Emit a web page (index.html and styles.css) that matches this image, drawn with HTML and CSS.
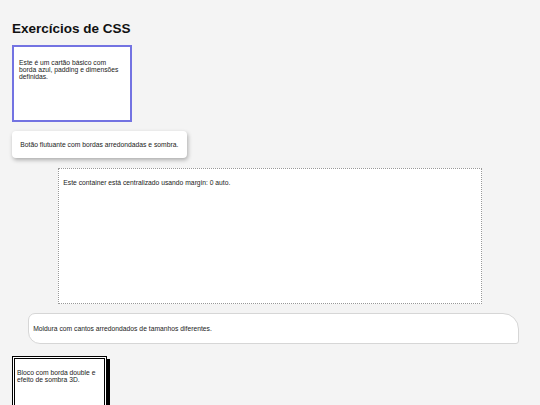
FILE: index.html
```html
<!DOCTYPE html>
<html lang="pt-BR">
<head>
<meta charset="utf-8">
<title>Exercícios de CSS</title>
<link rel="stylesheet" href="styles.css">
</head>
<body>
<main class="page">
  <h1 class="title">Exercícios de CSS</h1>
  <div class="card-basic">
    <p>Este é um cartão básico com borda azul, padding e dimensões definidas.</p>
  </div>
  <div class="btn-float">Botão flutuante com bordas arredondadas e sombra.</div>
  <div class="centered">
    <p>Este container está centralizado usando margin: 0 auto.</p>
  </div>
  <div class="frame">
    <p>Moldura com cantos arredondados de tamanhos diferentes.</p>
  </div>
  <div class="block3d">
    <p>Bloco com borda double e efeito de sombra 3D.</p>
  </div>
</main>
</body>
</html>
```
FILE: styles.css
```css
* { box-sizing: border-box; }
html, body { margin: 0; padding: 0; }
body {
  background: #f4f4f4;
  font-family: "Liberation Sans", Arial, sans-serif;
  font-size: 6.75px;
  color: #222;
}
.page {
  display: flex;
  flex-direction: column;
  align-items: flex-start;
  padding: 12px 12px 0 12px;
}
p { margin: 6.75px 0; }
.title {
  font-size: 13.5px;
  font-weight: bold;
  color: #111;
  margin: 9px 0 8.5px 0;
}
.card-basic {
  width: 119.7px;
  height: 77.7px;
  background: #fff;
  border: 2px solid #7373e2;
  padding: 5.4px 5px;
}
.btn-float {
  margin-top: 9.3px;
  background: #fff;
  padding: 9.8px 8.3px;
  border-radius: 4px;
  box-shadow: 1px 2px 4px rgba(0,0,0,0.3);
}
.centered {
  align-self: center;
  width: 423.4px;
  height: 136.4px;
  margin-top: 10px;
  background: #fff;
  border: 1px dotted #999;
  padding: 3.4px 4px;
}
.frame {
  align-self: stretch;
  margin: 8.8px 8.7px 0 16.2px;
  background: #fff;
  border: 1px solid #d6d6d6;
  border-radius: 7px 16px 3px 12px;
  padding: 4px 4px;
}
.block3d {
  margin-top: 12.5px;
  width: 95.3px;
  height: 100px;
  background: #fff;
  border: 3px double #000;
  box-shadow: 3px 3px 0 #000;
  padding: 3px 2px;
}
```
